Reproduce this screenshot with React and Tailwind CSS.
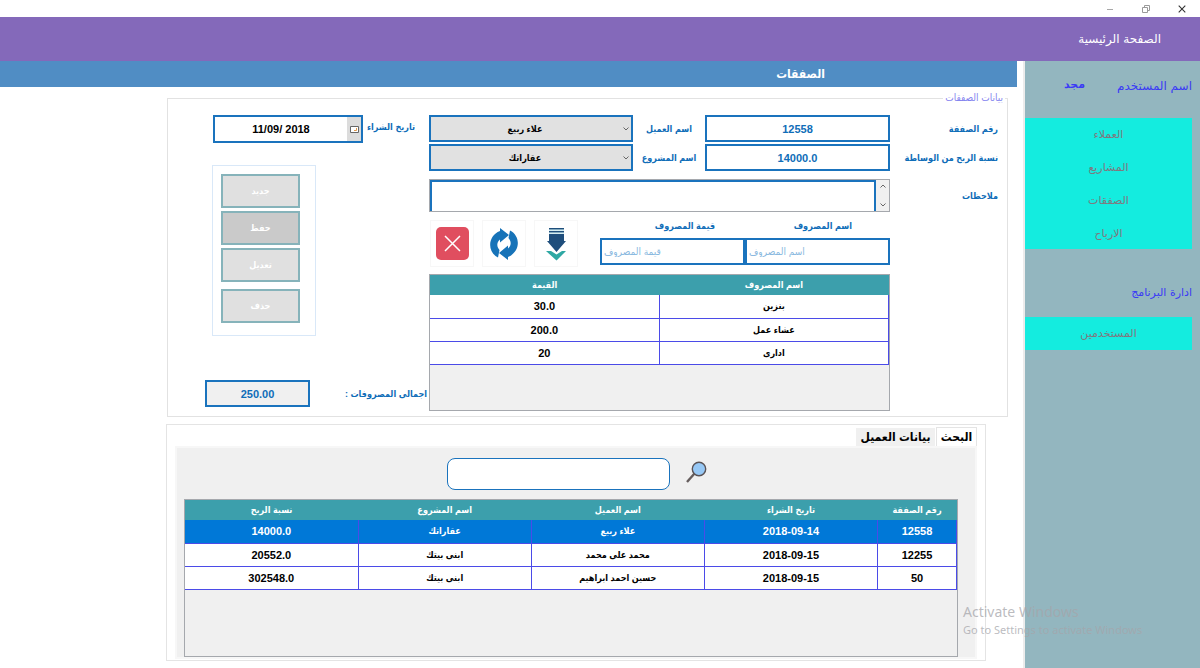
import { useState } from "react";

const menuItems = ["العملاء", "المشاريع", "الصفقات", "الارباح"];

const expenses = [
  { name: "بنزين", value: "30.0" },
  { name: "عشاء عمل", value: "200.0" },
  { name: "ادارى", value: "20" }
];

const deals = [
  { id: "12558", date: "2018-09-14", client: "علاء ربيع", project: "عقاراتك", profit: "14000.0" },
  { id: "12255", date: "2018-09-15", client: "محمد على محمد", project: "ابنى بيتك", profit: "20552.0" },
  { id: "50", date: "2018-09-15", client: "حسين احمد ابراهيم", project: "ابنى بيتك", profit: "302548.0" }
];

const actions = [
  { label: "جديد", className: "bg-[#e0e0e0]" },
  { label: "حفظ", className: "bg-[#cacaca] mt-[3px]" },
  { label: "تعديل", className: "bg-[#e0e0e0] mt-[3px]" },
  { label: "حذف", className: "bg-[#e0e0e0] mt-[7px]" }
];

function TitleBar() {
  return (
    <div dir="ltr" className="flex h-[17px] items-center justify-end bg-white">
      <button type="button" aria-label="Minimize" className="flex w-9 justify-center">
        <svg width="8" height="8" viewBox="0 0 8 8" stroke="#a8a8a8">
          <path d="M1 4.5h6" />
        </svg>
      </button>
      <button type="button" aria-label="Restore" className="flex w-9 justify-center">
        <svg width="8" height="8" viewBox="0 0 8 8" fill="none" stroke="#9a9a9a">
          <path d="M.5 2.5h5v5h-5zM2.5 2.5V.5h5v5h-2" />
        </svg>
      </button>
      <button type="button" aria-label="Close" className="flex w-9 justify-center">
        <svg width="8" height="8" viewBox="0 0 8 8" fill="none" stroke="#333" strokeWidth="1.1">
          <path d="M.7.7l6.6 6.6M7.3.7L.7 7.3" />
        </svg>
      </button>
    </div>
  );
}

function Sidebar() {
  return (
    <aside className="w-[175px] shrink-0 bg-[#93b6bf] pr-2 font-['DejaVu_Sans',sans-serif] text-xs text-[#3b3bf5]">
      <div className="flex h-[57px] items-center gap-8 pb-2">
        <span className="whitespace-nowrap">اسم المستخدم</span>
        <span className="text-[11px] font-bold">مجد</span>
      </div>
      <nav className="flex flex-col bg-[#14ecdf] text-[11px] text-[#80787e]">
        {menuItems.map((item) => (
          <a key={item} href="#" className="flex h-[33px] items-center justify-center pt-0.5 last:h-8">
            {item}
          </a>
        ))}
      </nav>
      <h2 className="mt-[34px] text-[11px] leading-5">ادارة البرنامج</h2>
      <nav className="mt-3.5 bg-[#14ecdf] text-[11px] text-[#80787e]">
        <a href="#" className="flex h-[33px] items-center justify-center pt-0.5">
          المستخدمين
        </a>
      </nav>
    </aside>
  );
}

function Chevron({ className }) {
  return (
    <svg className={className} width="6" height="4" viewBox="0 0 6 4" fill="none" stroke="#666">
      <path d="M.5.5L3 3L5.5.5" />
    </svg>
  );
}

function Field({ id, label, value }) {
  return (
    <>
      <label htmlFor={id} className="w-[117px] shrink-0 pr-[9px] whitespace-nowrap">
        {label}
      </label>
      <input
        id={id}
        defaultValue={value}
        className="h-[27px] w-[185px] border-2 border-[#1a73bd] bg-white text-center text-[11px]"
      />
    </>
  );
}

function Picker({ id, label, value }) {
  return (
    <>
      <label htmlFor={id} className="w-[72px] shrink-0 text-center whitespace-nowrap">
        {label}
      </label>
      <div className="relative min-w-0 flex-1">
        <select
          id={id}
          defaultValue={value}
          className="block h-[27px] w-full appearance-none border-2 border-[#1a73bd] bg-[#e1e1e1] pr-3 text-center text-black"
        >
          <option>{value}</option>
        </select>
        <Chevron className="pointer-events-none absolute top-3 right-1" />
      </div>
    </>
  );
}

function ExpenseField({ id, label, labelClassName }) {
  return (
    <div className="w-[145px]">
      <label htmlFor={id} className={`block h-5 leading-4 ${labelClassName}`}>
        {label}
      </label>
      <input
        id={id}
        placeholder={label}
        className="block h-[27px] w-full border-2 border-[#1a73bd] bg-white pl-0.5 text-left text-[10px] font-normal placeholder:text-[#8bb9e0]"
      />
    </div>
  );
}

function IconButton({ label, children }) {
  return (
    <button
      type="button"
      aria-label={label}
      className="flex h-[47px] w-11 items-center justify-center border border-[#f7f7f7]"
    >
      {children}
    </button>
  );
}

function ExpenseForm() {
  return (
    <div className="w-[578px] shrink-0">
      <div className="flex items-center">
        <Field id="deal-number" label="رقم الصفقة" value="12558" />
        <Picker id="client" label="اسم العميل" value="علاء ربيع" />
      </div>
      <div className="mt-0.5 flex items-center">
        <Field id="commission" label="نسبة الربح من الوساطة" value="14000.0" />
        <Picker id="project" label="اسم المشروع" value="عقاراتك" />
      </div>
      <div className="mt-2 flex items-center">
        <label htmlFor="notes" className="w-[117px] shrink-0 pr-[9px]">
          ملاحظات
        </label>
        <div className="flex h-[33px] flex-1 border border-[#a5a8ad]">
          <div className="flex w-[13px] flex-col items-center justify-between bg-[#f0f0f0] py-1">
            <Chevron className="rotate-180" />
            <Chevron />
          </div>
          <textarea
            id="notes"
            className="block min-w-0 flex-1 resize-none border-x-2 border-t-2 border-[#1a73bd] bg-white"
          />
        </div>
      </div>
      <div className="mt-1.5 mr-[117px] flex">
        <ExpenseField id="expense-name" label="اسم المصروف" labelClassName="pr-[38px]" />
        <ExpenseField id="expense-value" label="قيمة المصروف" labelClassName="pr-[30px]" />
        <div className="mt-0.5 flex gap-2 pr-[22px]">
          <IconButton label="اضافة">
            <svg width="20" height="34" viewBox="0 0 20 34">
              <path d="M3 1h15v1.5H3zM3 4h15v1.5H3z" fill="#1f4e7c" />
              <path d="M3 7h15v7h2L10.5 25L1 14h2z" fill="#1f4e7c" />
              <path d="M3 3h15M3 6h15" stroke="#63b5c6" strokeWidth=".5" />
              <path d="M0 24h5l5.500 3.500l5.500-3.500h4l-9.500 9.500z" fill="#2fa8a4" />
            </svg>
          </IconButton>
          <IconButton label="تحديث">
            <svg width="28" height="32" viewBox="0 0 28 32" fill="#1773b8">
              <path d="M10 0l9 7l-9 7.500v-3C6 15 7 19 9.500 22L8 29.500C-3 24-2.500 8 10 3z" />
              <path d="M18 32l-9-7l9-7.500v3C22 17 21 13 18.500 10L20 2.500C31 8 30.500 24 18 29z" />
            </svg>
          </IconButton>
          <IconButton label="الغاء">
            <svg width="33" height="33" viewBox="0 0 33 33">
              <rect width="33" height="33" rx="5" fill="#e04e5f" />
              <path d="M9 9l15 15M24 9L9 24" stroke="#fff" strokeWidth="1.5" />
            </svg>
          </IconButton>
        </div>
      </div>
      <div className="mt-[7px] mr-[117px] min-h-[137px] border border-[#a5a8ad] bg-[#f0f0f0]">
        <table className="w-full table-fixed border-collapse text-center text-black">
          <thead className="bg-[#3c9fac] text-white">
            <tr className="h-5">
              <th className="p-0">اسم المصروف</th>
              <th className="p-0">القيمة</th>
            </tr>
          </thead>
          <tbody>
            {expenses.map((row) => (
              <tr key={row.name} className="h-[23px] bg-white">
                <td className="border-x border-b border-[#4b4be8] p-0">{row.name}</td>
                <td className="border-b border-[#4b4be8] p-0 text-[11px]">{row.value}</td>
              </tr>
            ))}
          </tbody>
        </table>
      </div>
    </div>
  );
}

function ActionsPanel() {
  return (
    <div className="min-w-0 flex-1">
      <div className="flex items-start pr-3.5">
        <label htmlFor="purchase-date" className="w-[52px] leading-6 whitespace-nowrap">
          تاريخ الشراء
        </label>
        <div className="flex h-7 w-[150px] border-2 border-[#1a73bd]">
          <button
            type="button"
            aria-label="Calendar"
            className="flex w-3.5 shrink-0 items-center justify-center bg-[#dcdcdc]"
          >
            <svg width="9" height="7" viewBox="0 0 9 7" fill="none">
              <path d="M.5.5h8v6h-8z" fill="#fff" stroke="#666" />
              <path d="M4 4.5h2.500V2" stroke="#e39a4c" />
            </svg>
          </button>
          <input
            id="purchase-date"
            dir="ltr"
            defaultValue="11/09/ 2018"
            className="w-full min-w-0 bg-white text-center text-[11px] text-black"
          />
        </div>
      </div>
      <div className="mt-[22px] mr-[113px] flex h-[171px] w-[104px] flex-col border border-[#d9e8f8] pt-2 pr-[15px]">
        {actions.map((action) => (
          <button
            key={action.label}
            type="button"
            className={`h-[34px] w-[79px] border-2 border-[#86b3ba] pb-px text-white ${action.className}`}
          >
            {action.label}
          </button>
        ))}
      </div>
      <div className="mt-11 flex items-center pr-0.5">
        <label htmlFor="total" className="w-[117px] whitespace-nowrap">
          اجمالى المصروفات :
        </label>
        <input
          id="total"
          readOnly
          value="250.00"
          className="h-[27px] w-[105px] border-2 border-[#1a73bd] bg-[#f0f0f0] text-center text-[11px]"
        />
      </div>
    </div>
  );
}

function SearchPanel() {
  const [query, setQuery] = useState("");

  return (
    <section className="mt-[7px] mr-[31px] ml-[166px] h-[237px] border border-[#e4e4e4] px-2 pt-0.5">
      <div role="tablist" className="flex h-[19px] items-end gap-px text-xs font-bold text-black">
        <button
          type="button"
          role="tab"
          aria-selected="true"
          className="h-[19px] w-[41px] border border-b-0 border-[#e4e4e4] bg-white leading-4 whitespace-nowrap"
        >
          البحث
        </button>
        <button
          type="button"
          role="tab"
          aria-selected="false"
          className="h-[18px] w-[79px] bg-[#f0f0f0] leading-4 whitespace-nowrap"
        >
          بيانات العميل
        </button>
      </div>
      <div className="h-[213px] border-2 border-[#f7f7f7] bg-[#f0f0f0] pr-[17px] pl-[7px]">
        <div className="flex h-[51px] items-center pr-[251px]">
          <button type="button" aria-label="بحث" className="mb-1 ml-4">
            <svg width="21" height="22" viewBox="0 0 21 22" fill="none">
              <path d="M8.5 12.5L1 21" stroke="#655d5d" strokeWidth="2.4" />
              <circle cx="13" cy="8" r="6.7" fill="#97c8f5" stroke="#5a5356" strokeWidth="1.4" />
            </svg>
          </button>
          <input
            aria-label="البحث"
            value={query}
            onChange={(e) => setQuery(e.target.value)}
            className="h-8 w-[223px] rounded-lg border border-[#1a73bd] bg-white px-2 text-[11px] outline-none"
          />
        </div>
        <div className="h-[158px] border border-[#a5a8ad]">
          <table className="w-full table-fixed border-collapse text-center text-black">
            <thead className="bg-[#3c9fac] text-white">
              <tr className="h-5">
                <th className="w-[79px] p-0">رقم الصفقة</th>
                <th className="p-0">تاريخ الشراء</th>
                <th className="p-0">اسم العميل</th>
                <th className="p-0">اسم المشروع</th>
                <th className="p-0">نسبة الربح</th>
              </tr>
            </thead>
            <tbody>
              {deals.map((deal, i) => (
                <tr
                  key={deal.id}
                  className={`h-[23px] ${i === 0 ? "bg-[#0078d7] text-white" : "bg-white"}`}
                >
                  <td className="border-x border-b border-[#4b4be8] p-0 text-[11px]">{deal.id}</td>
                  <td className="border-b border-l border-[#4b4be8] p-0 text-[11px]">{deal.date}</td>
                  <td className="border-b border-l border-[#4b4be8] p-0">{deal.client}</td>
                  <td className="border-b border-l border-[#4b4be8] p-0">{deal.project}</td>
                  <td className="border-b border-[#4b4be8] p-0 text-[11px]">{deal.profit}</td>
                </tr>
              ))}
            </tbody>
          </table>
        </div>
      </div>
    </section>
  );
}

export default function App() {
  return (
    <div
      dir="rtl"
      className="relative flex min-h-screen flex-col overflow-hidden bg-white font-['Liberation_Sans','DejaVu_Sans_Condensed','DejaVu_Sans',sans-serif]"
    >
      <TitleBar />
      <header className="flex h-11 items-center bg-[#8469ba] pr-[39px] font-['DejaVu_Sans',sans-serif] text-xs text-white">
        <h1>الصفحة الرئيسية</h1>
      </header>
      <div className="flex flex-1">
        <Sidebar />
        <div className="w-2 shrink-0 border-r-2 border-[#ececec]" />
        <main className="min-w-0 flex-1 text-[9px] leading-4 font-bold text-[#0f6db8]">
          <h2 className="h-[26px] bg-[#508dc4] pr-48 text-xs leading-[26px] text-white">الصفقات</h2>
          <fieldset className="mt-[3px] mr-[9px] ml-[167px] border border-[#e2e2e2] pb-[5px]">
            <legend className="mr-0.5 px-0.5 text-[10px] font-normal text-[#8585ef]">بيانات الصفقات</legend>
            <div className="flex pt-[9px]">
              <ExpenseForm />
              <ActionsPanel />
            </div>
          </fieldset>
          <SearchPanel />
        </main>
      </div>
      <div
        dir="ltr"
        className="pointer-events-none absolute right-0 bottom-[30px] w-[237px] font-['Noto_Sans',sans-serif] text-[#a5a5aa]/75"
      >
        <p className="text-sm leading-5">Activate Windows</p>
        <p className="text-[11px] leading-4">Go to Settings to activate Windows</p>
      </div>
    </div>
  );
}
